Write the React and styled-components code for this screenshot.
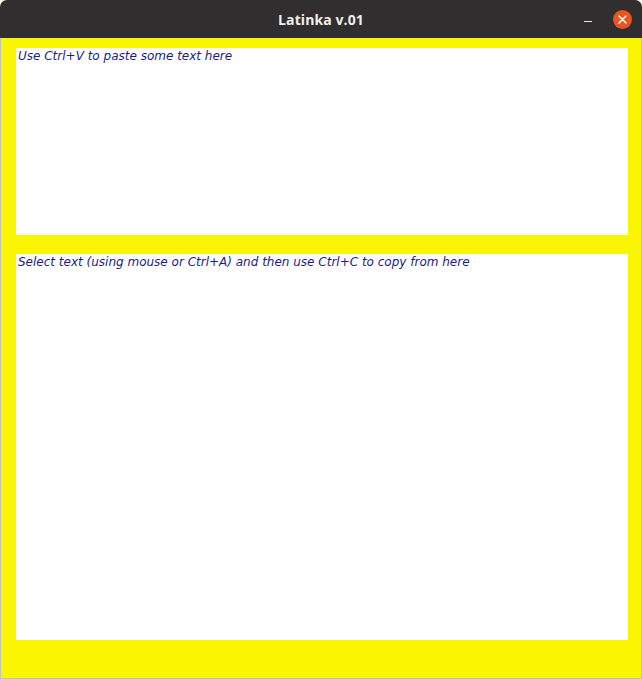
import React from "react";
import styled, { createGlobalStyle } from "styled-components";

const Global = createGlobalStyle`
  html, body { margin: 0; padding: 0; background: #ffffff; }
  #root { width: 642px; height: 679px; }
`;

const Window = styled.div`
  width: 642px;
  height: 679px;
  box-sizing: border-box;
  display: flex;
  flex-direction: column;
  border-radius: 7px 7px 0 0;
  overflow: hidden;
  background: #faf500;
`;

const TitleBar = styled.div`
  height: 38px;
  flex: 0 0 38px;
  background: #302e2e;
  display: grid;
  grid-template-columns: 1fr auto 1fr;
  align-items: center;
  padding: 0 10px 0 10px;
  box-sizing: border-box;
`;

const Title = styled.div`
  grid-column: 2;
  color: #f0eeec;
  font-family: "Open Sans", "DejaVu Sans", sans-serif;
  font-weight: 700;
  font-size: 14px;
  letter-spacing: 0.1px;
`;

const Controls = styled.div`
  grid-column: 3;
  justify-self: end;
  display: flex;
  align-items: center;
  gap: 21px;
`;

const MinButton = styled.div`
  width: 8px;
  height: 1px;
  background: #e8e8e8;
  margin-top: 4px;
`;

const CloseButton = styled.div`
  width: 19px;
  height: 19px;
  border-radius: 50%;
  background: #e95420;
  display: flex;
  align-items: center;
  justify-content: center;
`;

const Body = styled.div`
  flex: 1;
  display: flex;
  flex-direction: column;
  gap: 19px;
  padding: 10px 13px 38px 15px;
  border: 1px solid #c0c0c0;
  border-top: none;
`;

const TextArea = styled.div`
  background: #ffffff;
  height: ${(p) => p.$h}px;
  padding: 1px 2px;
  box-sizing: border-box;
  font-family: "DejaVu Sans", sans-serif;
  font-style: italic;
  font-size: 12px;
  line-height: 14px;
  color: #1c1c86;
`;

export default function App() {
  return (
    <>
      <Global />
      <Window>
        <TitleBar>
          <Title>Latinka v.01</Title>
          <Controls>
            <MinButton />
            <CloseButton>
              <svg width="9" height="9" viewBox="0 0 9 9">
                <path d="M1 1 L8 8 M8 1 L1 8" stroke="#ffffff" strokeWidth="1.5" strokeLinecap="round" />
              </svg>
            </CloseButton>
          </Controls>
        </TitleBar>
        <Body>
          <TextArea $h={187}>Use Ctrl+V to paste some text here</TextArea>
          <TextArea $h={386}>Select text (using mouse or Ctrl+A) and then use Ctrl+C to copy from here</TextArea>
        </Body>
      </Window>
    </>
  );
}
